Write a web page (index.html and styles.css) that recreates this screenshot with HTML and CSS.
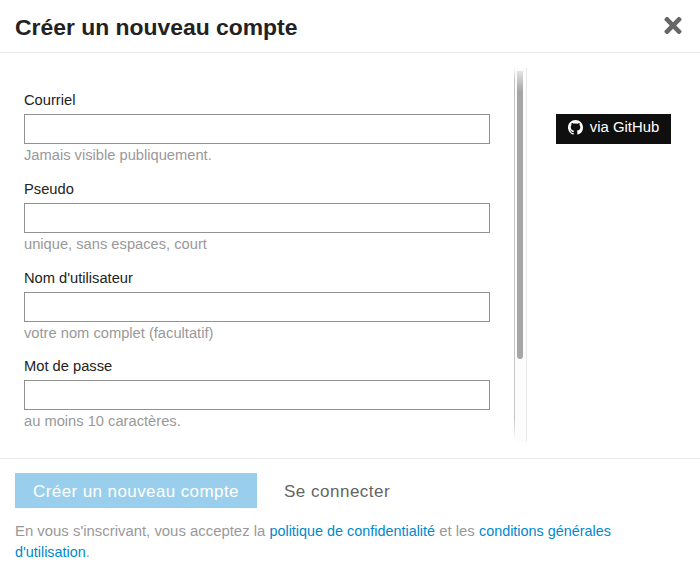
FILE: index.html
```html
<!DOCTYPE html>
<html lang="fr">
<head>
    <meta charset="UTF-8">
    <meta name="viewport" content="width=device-width, initial-scale=1.0">
    <title>Créer un nouveau compte</title>
    <link rel="stylesheet" href="styles.css">
</head>
<body>
    <div class="modal">
        <header class="modal-header">
            <h1>Créer un nouveau compte</h1>
            <svg class="close-icon" viewBox="0 0 352 512" aria-label="Fermer">
                <path d="M242.7 256l100-100c12.300-12.300 12.300-32.200 0-44.500l-22.200-22.200c-12.300-12.300-32.200-12.300-44.500 0L176 189.300 76 89.300c-12.300-12.300-32.200-12.300-44.500 0L9.300 111.500c-12.300 12.300-12.300 32.200 0 44.500l100 100-100 100c-12.300 12.300-12.300 32.200 0 44.500l22.200 22.200c12.300 12.300 32.200 12.300 44.500 0l100-100 100 100c12.300 12.300 32.200 12.300 44.500 0l22.200-22.200c12.300-12.300 12.300-32.200 0-44.500L242.700 256z"/>
            </svg>
        </header>

        <div class="modal-body">
            <form class="signup-form">
                <div class="field">
                    <label for="email">Courriel</label>
                    <input id="email" type="text">
                    <div class="hint">Jamais visible publiquement.</div>
                </div>
                <div class="field">
                    <label for="pseudo">Pseudo</label>
                    <input id="pseudo" type="text">
                    <div class="hint">unique, sans espaces, court</div>
                </div>
                <div class="field">
                    <label for="fullname">Nom d'utilisateur</label>
                    <input id="fullname" type="text">
                    <div class="hint">votre nom complet (facultatif)</div>
                </div>
                <div class="field">
                    <label for="password">Mot de passe</label>
                    <input id="password" type="password">
                    <div class="hint">au moins 10 caractères.</div>
                </div>
            </form>

            <div class="scroll-track">
                <div class="scroll-thumb"></div>
            </div>

            <div class="login-side">
                <button class="github-button" type="button">
                    <svg class="github-icon" viewBox="0 0 16 16">
                        <path d="M8 0C3.580 0 0 3.580 0 8c0 3.540 2.290 6.530 5.470 7.590.4.070.55-.17.55-.38 0-.19-.01-.82-.01-1.490-2.010.37-2.530-.49-2.690-.94-.09-.23-.48-.94-.82-1.130-.28-.15-.68-.52-.01-.53.630-.01 1.080.58 1.230.82.720 1.210 1.870.87 2.330.66.070-.52.280-.87.510-1.070-1.780-.2-3.640-.89-3.640-3.950 0-.87.310-1.590.82-2.150-.08-.2-.36-1.020.08-2.120 0 0 .67-.21 2.200.82.640-.18 1.320-.27 2-.27s1.360.09 2 .27c1.530-1.040 2.200-.82 2.200-.82.440 1.100.16 1.920.08 2.120.51.560.82 1.270.82 2.150 0 3.070-1.870 3.750-3.650 3.950.290.250.540.730.540 1.480 0 1.070-.01 1.930-.01 2.200 0 .21.150.460.550.380A8.010 8.010 0 0 0 16 8c0-4.420-3.580-8-8-8z"/>
                    </svg>
                    via GitHub
                </button>
            </div>
        </div>

        <footer class="modal-footer">
            <div class="actions">
                <button class="create-button" type="button">Créer un nouveau compte</button>
                <a class="login-link" href="#">Se connecter</a>
            </div>
            <p class="terms">En vous s'inscrivant, vous acceptez la <a href="#">politique de confidentialité</a> et les <a href="#">conditions générales</a> <a href="#">d'utilisation</a>.</p>
        </footer>
    </div>
</body>
</html>
```

FILE: styles.css
```css
:root {
    --text: #222222;
    --muted: #999999;
    --link: #0088cc;
    --line: #e9e9e9;
}

* {
    box-sizing: border-box;
}

body {
    margin: 0;
    background: white;
    font-family: "Liberation Sans", Arial, sans-serif;
    font-size: 14.7px;
    color: var(--text);
}

.modal {
    height: 572px;
    display: flex;
    flex-direction: column;
}

.modal-header {
    height: 53px;
    padding: 0 18px 0 15px;
    display: flex;
    align-items: center;
    justify-content: space-between;
    border-bottom: 1px solid var(--line);
}

.modal-header h1 {
    margin: 2px 0 0;
    font-size: 22.9px;
    font-weight: 700;
}

.close-icon {
    width: 18px;
    height: 25px;
    margin-bottom: 2px;
    fill: #666666;
}

.modal-body {
    height: 405px;
    padding: 15px 0 16px 24px;
    display: flex;
}

.signup-form {
    width: 466px;
    padding-top: 22px;
    overflow: hidden;
}

.field {
    height: 88.8px;
}

.field label {
    display: block;
    line-height: 20px;
    margin-bottom: 4px;
}

.field input {
    display: block;
    width: 100%;
    height: 30px;
    padding: 4px 10px;
    border: 1px solid #919191;
    background: white;
}

.hint {
    margin-top: 2px;
    line-height: 18px;
    color: var(--muted);
}

.scroll-track {
    width: 13px;
    margin-left: 24px;
    padding: 3px 3px 0 3px;
    border-right: 1px solid var(--line);
    background:
        linear-gradient(transparent, #c4c4c4 12px, #c4c4c4 350px, transparent 370px) 0 0 / 1px 100% no-repeat,
        #fcfcfc;
}

.scroll-thumb {
    width: 6px;
    height: 288px;
    border-radius: 0 0 3px 3px;
    background: linear-gradient(#e4e4e4, #a6a6a6 20px);
}

.login-side {
    flex: 1;
    padding: 46px 29px 0;
}

.github-button {
    width: 115px;
    height: 30px;
    padding: 0 0 4px;
    display: flex;
    align-items: center;
    justify-content: center;
    gap: 7px;
    border: none;
    background: #100f0f;
    color: white;
    font-family: inherit;
    font-size: 14.9px;
}

.github-icon {
    width: 15px;
    height: 15px;
    fill: white;
}

.modal-footer {
    flex: 1;
    padding: 14px 15px 0;
    border-top: 1px solid var(--line);
}

.actions {
    display: flex;
    align-items: center;
    gap: 27px;
}

.create-button {
    width: 242px;
    height: 35px;
    padding: 2px 0 0;
    border: none;
    background: #99cfec;
    color: white;
    font-family: inherit;
    font-size: 17px;
    letter-spacing: 0.4px;
}

.login-link {
    margin-top: 2px;
    color: #646464;
    font-size: 17px;
    letter-spacing: 0.5px;
    text-decoration: none;
}

.terms {
    max-width: 640px;
    margin: 13px 0 0;
    font-size: 14.9px;
    line-height: 21px;
    color: var(--muted);
}

.terms a {
    color: var(--link);
    font-size: 14.4px;
    text-decoration: none;
}
```
